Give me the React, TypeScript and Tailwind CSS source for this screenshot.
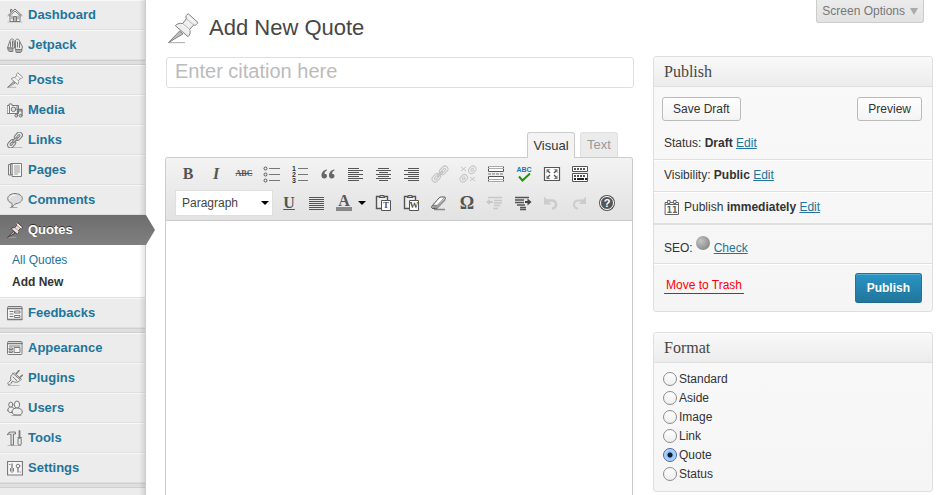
import React, { useState } from "react";

type IconProps = { children: React.ReactNode; size?: string; box?: string };

function Icon({ children, size = "size-4", box = "0 0 16 16" }: IconProps) {
  return (
    <svg
      aria-hidden="true"
      viewBox={box}
      className={`${size} shrink-0`}
      fill="none"
      stroke="#7a7a7a"
      strokeWidth="1"
      strokeLinecap="round"
      strokeLinejoin="round"
    >
      {children}
    </svg>
  );
}

function Pin({ fill, stroke, width }: { fill: string; stroke: string; width: number }) {
  return (
    <g stroke={stroke} strokeWidth={width}>
      <path d="M4 89H50" stroke="#aaa" />
      <path d="M2 88 35 54l9 8z" fill="#bbb" />
      <path
        d="M60 3c-6 2-8 7-5 14L44 32c-8-2-16-1-22 6l38 33c7-6 8-14 5-22l12-13c5 2 9 1 12-7z"
        fill={fill}
      />
      <path d="M57 8 84 32M43 35l21 17" stroke="#fff" />
      <path d="M55 17 77 36M44 32l21 17" strokeWidth={width / 2} />
    </g>
  );
}

const menuIcons: Record<string, React.ReactNode> = {
  Dashboard: (
    <>
      <path d="M1 15h14" stroke="#bbb" />
      <path d="M3 8v6.500h10V8" fill="#f5f5f5" />
      <path d="M1 8.500 8 2l7 6.500M2.500 9 8 4l5.500 5M3.500 5V2.500h1.500V4" />
      <path d="M6.500 14V9.500h3V14M8 9.500V14M5 9v3M11 9v3" />
    </>
  ),
  Jetpack: (
    <>
      <path d="M1 9.500 3 3.500c.7-2 3.500-2 4 0l.5 7.500H1zM8.500 3.500c.5-2 3.300-2 4 .5l3 6-.8 2.500H9z" fill="#e8e8e8" />
      <path d="M.8 11h5v3.500H2.500c-1 0-1.700-1.500-1.700-3.500zM9 12.500h6c0 2-.8 3-2 3H9.500z" fill="#aaa" />
      <path d="M7 6h1.500M7 8h1.500M3.500 5v4.500M5.500 4v5.500M10.500 5v5M12.500 5.500v5" />
    </>
  ),
  Media: (
    <>
      <path d="M.5 3.500H2V2h3v1.500h6.500v8H.5z" fill="#f5f5f5" />
      <circle cx="6.500" cy="7.300" r="2.300" fill="#ddd" />
      <path d="M2.500 4v7M10 4v3" />
      <path d="M10.500 13.500V7.500h4.500V13" strokeWidth="1.300" />
      <path d="M10.500 9h4.500" />
      <circle cx="9.300" cy="13.700" r="1.400" fill="#ccc" />
      <circle cx="13.700" cy="13.700" r="1.400" fill="#ccc" />
    </>
  ),
  Links: (
    <>
      <path d="M1 15.500h14" stroke="#bbb" />
      <g transform="rotate(-48 8 8)">
        <rect x="-1.500" y="5" width="9" height="6" rx="3" fill="#eee" />
        <rect x="1" y="7.100" width="4" height="1.800" rx=".9" />
        <rect x="8.500" y="5" width="9" height="6" rx="3" fill="#eee" />
        <rect x="11" y="7.100" width="4" height="1.800" rx=".9" />
        <rect x="5" y="6.900" width="6" height="2.200" rx="1.100" fill="#ccc" />
      </g>
    </>
  ),
  Pages: (
    <>
      <path d="M4 2.500H1.500v10.500H4M6 1.500H3.500v11H6" />
      <path d="M5.500 1.500h9v13h-9z" fill="#f7f7f7" />
      <path d="M7.500 4h5M7.500 6h5M7.500 8h5M7.500 10h5M7.500 12h3" stroke="#999" />
    </>
  ),
  Comments: (
    <>
      <path d="M3 15.500h7" stroke="#aaa" />
      <path
        d="M8 1.500c4 0 7.300 2.200 7.300 5S12.500 11.300 9 11.600c-1.200.2-2 2.600-4.500 3.600.8-1.500.8-2.700.3-4C2.500 10.500.7 9 .7 6.500c0-2.800 3.300-5 7.300-5z"
        fill="#ddd"
      />
      <path d="M2.500 6.500C3 4.500 5 3.200 8 3.200" stroke="#fff" />
    </>
  ),
  Feedbacks: (
    <>
      <rect x=".5" y="1.500" width="14.500" height="13" rx="1" fill="#f4f4f4" />
      <path d="M1 3.500h14M.5 14.500H15" strokeWidth="1.400" />
      <path d="M3 6.500h3M3 9h3M3 11.500h3" />
      <path d="M8 6h5v2H8zM8 10.500h5v2H8z" />
    </>
  ),
  Appearance: (
    <>
      <rect x=".5" y="1.500" width="14.500" height="13" rx="1" fill="#f4f4f4" />
      <path d="M1 3.500h14" strokeWidth="1.400" />
      <path d="M2.500 6h10.500M2.500 8h3v1.500h-3zM2.500 11h3v1.500h-3z" />
      <path d="M7.500 7.500H13v5H7.500z" />
    </>
  ),
  Plugins: (
    <>
      <path d="M1 15.500h11" stroke="#bbb" />
      <path d="m9.500 3.500 2.500-3M12.700 7.500l2.800-2.300" strokeWidth="1.500" />
      <path d="M6 3.500 13.500 10c-2 2.500-5.500 3-8 1L4 13.500c-1 1.500-2.500 1.500-3 .5s.5-2 2-3l1-1C3 7.500 3.700 5 6 3.500z" fill="#eee" />
      <path d="m7.500 3 7 6.300M6 7l4 3.800" />
    </>
  ),
  Users: (
    <>
      <path d="M5 15.500h9" stroke="#aaa" />
      <ellipse cx="3.800" cy="4.700" rx="2.100" ry="2.600" fill="#eee" />
      <path d="M.8 10.500C.8 8 2 7 4 7s3 1 3 3-1.500 2.500-3 2.500-3.200-.5-3.200-2z" fill="#eee" />
      <ellipse cx="10" cy="4.600" rx="2.600" ry="3.600" fill="#f3f3f3" />
      <path d="M5 12c0-2.500 2-4 5-4s5.300 1.500 5.300 4-2.300 3-5.300 3-5-1-5-3z" fill="#eee" />
    </>
  ),
  Tools: (
    <>
      <path d="M1 15.500h13" stroke="#bbb" />
      <path d="M.5 4.500c.5-2 2-2.500 4-2.500h4v2H6.500v11h-2.500V4.500C2.500 4 1.500 4 .5 4.500z" fill="#ddd" />
      <path d="M12.500 1v6" strokeWidth="1.800" />
      <rect x="11" y="8" width="3.200" height="7" rx="1" fill="#eee" />
      <path d="M11 7.500h3.500" />
    </>
  ),
  Settings: (
    <>
      <rect x=".5" y="1.500" width="15" height="13.500" fill="#f7f7f7" strokeWidth="1.200" />
      <path d="M5 4v4M11 8v4" strokeWidth="1.300" />
      <path d="M3.500 8.500v2.500l1.500 1.500 1.500-1.500V8.500M5 9v1.500" />
      <circle cx="11" cy="6" r="1.800" />
      <path d="M2.500 4.500h.5M13 12h.5" />
    </>
  ),
};

function MenuItem({ name }: { name: string }) {
  return (
    <li>
      <a
        href="#"
        className="flex h-[30px] items-center gap-[5px] border-t border-b border-t-[#f9f9f9] border-b-[#dfdfdf] pl-[7px] text-[13px] leading-[18px] font-bold text-[#21759b]"
      >
        {name === "Posts" ? (
          <Icon box="-3 -3 96 96">
            <Pin fill="#f4f4f4" stroke="#7a7a7a" width={5} />
          </Icon>
        ) : (
          <Icon>{menuIcons[name]}</Icon>
        )}
        <span>{name}</span>
      </a>
    </li>
  );
}

const Separator = () => <li className="h-[5px] border-t border-b border-[#cfcfcf] bg-[#dfdfdf]" />;

function Sidebar() {
  return (
    <nav className="relative w-[146px] shrink-0 border-r border-[#ccc] bg-[#ececec]">
      <ul>
        <MenuItem name="Dashboard" />
        <MenuItem name="Jetpack" />
        <Separator />
        <MenuItem name="Posts" />
        <MenuItem name="Media" />
        <MenuItem name="Links" />
        <MenuItem name="Pages" />
        <MenuItem name="Comments" />
        <li>
          <a
            href="#"
            className="relative z-10 flex h-[30px] items-center gap-[5px] bg-linear-to-b from-[#6d6d6d] to-[#808080] pl-[7px] text-[13px] leading-[18px] font-bold text-white"
          >
            <Icon box="-3 -3 96 96">
              <Pin fill="#ecdcdc" stroke="#443838" width={5} />
            </Icon>
            <span className="[text-shadow:0_-1px_0_#333]">Quotes</span>
            <span className="absolute top-0 left-full h-[30px] w-[10px] bg-linear-to-b from-[#6d6d6d] to-[#808080] [clip-path:polygon(0_0,10%_0,100%_50%,10%_100%,0_100%)]" />
          </a>
          <ul className="h-[53px] border-b border-[#dfdfdf] bg-white pt-[4px] pl-3 text-[12px] leading-[22px]">
            <li>
              <a href="#" className="text-[#21759b]">All Quotes</a>
            </li>
            <li>
              <a href="#" className="font-bold text-[#333]">Add New</a>
            </li>
          </ul>
        </li>
        <MenuItem name="Feedbacks" />
        <Separator />
        <MenuItem name="Appearance" />
        <MenuItem name="Plugins" />
        <MenuItem name="Users" />
        <MenuItem name="Tools" />
        <MenuItem name="Settings" />
        <Separator />
      </ul>
      <div className="pointer-events-none absolute inset-y-0 right-0 w-[6px] bg-linear-to-r from-transparent to-black/10" />
    </nav>
  );
}

function Tool({ label, children }: { label: string; children: React.ReactNode }) {
  return (
    <button
      type="button"
      aria-label={label}
      className="flex h-[26px] w-7 shrink-0 items-center justify-center font-['Liberation_Serif',serif] leading-none text-[#555]"
    >
      {children}
    </button>
  );
}

function Glyph({ children }: { children: React.ReactNode }) {
  return (
    <Icon size="size-[18px]" box="0 0 18 18">
      <g stroke="#555" strokeLinecap="butt" strokeLinejoin="miter">
        {children}
      </g>
    </Icon>
  );
}

const Bullets = () => (
  <Glyph>
    <path d="M6 3.500h11M6 9.500h11M6 15.500h11" stroke="#777" />
    <circle cx="2.500" cy="3.500" r="1.500" />
    <circle cx="2.500" cy="9.500" r="1.500" />
    <circle cx="2.500" cy="15.500" r="1.500" />
  </Glyph>
);

const Numbers = () => (
  <Glyph>
    <path d="M7 3.500h10M7 9.500h10M7 15.500h10" stroke="#777" />
    <g fill="#333" stroke="none" fontFamily="Liberation Sans, sans-serif" fontSize="7" fontWeight="bold">
      <text x="1" y="6">1</text>
      <text x="1" y="12">2</text>
      <text x="1" y="18">3</text>
    </g>
  </Glyph>
);

const Quotation = () => (
  <Glyph>
    <path
      d="M8 4.500C4.500 5 2.500 7.500 2.500 10.500 2.500 12.500 3.600 13.500 5.200 13.500S8 12.400 8 11 6.800 8.700 5.400 8.800C5.600 7.300 6.600 6 8 5.300zM15.500 4.500c-3.500.5-5.500 3-5.500 6 0 2 1.100 3 2.700 3s2.800-1.100 2.800-2.500-1.200-2.300-2.600-2.200c.2-1.500 1.200-2.800 2.600-3.500z"
      fill="#666"
      stroke="none"
    />
  </Glyph>
);

const AlignLeft = () => (
  <Glyph>
    <path d="M1 3.500h11M1 5.500h15M1 7.500h11M1 9.500h15M1 11.500h11M1 13.500h15M1 15.500h11" />
  </Glyph>
);

const AlignCenter = () => (
  <Glyph>
    <path d="M3 3.500h11M1 5.500h15M4 7.500h9M1 9.500h15M3 11.500h11M1 13.500h15M4 15.500h9" />
  </Glyph>
);

const AlignRight = () => (
  <Glyph>
    <path d="M5 3.500h11M1 5.500h15M5 7.500h11M1 9.500h15M5 11.500h11M1 13.500h15M5 15.500h11" />
  </Glyph>
);

const Justify = () => (
  <Glyph>
    <path d="M1 3.500h15M1 5.500h15M1 7.500h15M1 9.500h15M1 11.500h15M1 13.500h15M1 15.500h15" />
  </Glyph>
);

const LinkGlyph = () => (
  <Glyph>
    <g transform="rotate(-45 9 9)" stroke="#c2c2c2">
      <rect x="-1" y="6" width="9.500" height="6" rx="3" />
      <rect x="1.500" y="8" width="4.500" height="2" rx="1" />
      <rect x="9.500" y="6" width="9.500" height="6" rx="3" />
      <rect x="12" y="8" width="4.500" height="2" rx="1" />
      <path d="M6 8h6v2H6z" fill="#ccc" />
    </g>
  </Glyph>
);

const UnlinkGlyph = () => (
  <Glyph>
    <g stroke="#c6c6c6">
      <g transform="rotate(-45 9 9)">
        <rect x="-1" y="6" width="8" height="6" rx="3" />
        <rect x="1.500" y="8" width="3" height="2" rx="1" />
        <rect x="11" y="6" width="8" height="6" rx="3" />
        <rect x="13.500" y="8" width="3" height="2" rx="1" />
      </g>
      <path d="m2 2 5 4M2 6l5-4M11 12l5 4M11 16l5-4" />
    </g>
  </Glyph>
);

const MoreGlyph = () => (
  <Glyph>
    <path d="M1.500 1v5.500h15V1M1.500 17v-5.500h15V17" fill="#fff" />
    <path d="M1 1.500h16M1 3.500h16M1 14.500h16M1 16.500h16" stroke="#aaa" />
    <path d="M1 9h16" stroke="#777" strokeDasharray="3 1" />
  </Glyph>
);

const SpellGlyph = () => (
  <span className="flex flex-col items-center">
    <span className="font-['Liberation_Sans',sans-serif] text-[7px] leading-[7px] font-bold text-[#1a78b8]">ABC</span>
    <svg viewBox="0 0 14 9" className="h-[9px] w-[14px]" aria-hidden="true">
      <path d="m2 3.500 3.500 4L13 .5" fill="none" stroke="#1a9a00" strokeWidth="2" />
    </svg>
  </span>
);

const FullscreenGlyph = () => (
  <Glyph>
    <path d="M1.500 2.500h15v13h-15z" fill="#fff" strokeWidth="1.200" />
    <path d="M3.500 4.200h3.800L3.500 8zM14.500 4.200h-3.800L14.500 8zM3.500 14h3.800L3.500 10.200zM14.500 14h-3.800l3.800-3.800z" fill="#777" stroke="none" />
    <path d="M5 6l2 2M13 6l-2 2M5 12l2-2M13 12l-2-2" strokeWidth="1.300" />
  </Glyph>
);

const KitchenSinkGlyph = () => (
  <Glyph>
    <path d="M1.500 1.500h15v5h-15zM1.500 8.500h15v8h-15z" fill="#fff" />
    <path d="M3 4h12M3 11h12" strokeWidth="2" strokeDasharray="2 1" />
    <path d="M3 14h2M6 14h7M14 14h2" stroke="#222" strokeWidth="2" />
  </Glyph>
);

function PasteGlyph({ letter }: { letter: string }) {
  return (
    <span className="relative">
      <Glyph>
        <path d="M2.500 2.500h11v12h-11z" fill="#eee" strokeWidth="1.400" />
        <path d="M5 3.500h6M6 1.500h4v2H6z" fill="#ccc" />
        <path d="M7.500 6.500h9v10h-9z" fill="#fff" />
      </Glyph>
      <span className="absolute right-px bottom-[2px] w-[10px] text-center text-[9px] leading-[9px] font-bold">{letter}</span>
    </span>
  );
}

const EraserGlyph = () => (
  <Glyph>
    <path d="M4 15.500h11" stroke="#888" strokeWidth="1.500" />
    <path d="m2 12 7-8c.6-.8 1.300-1 2.200-1H14c1.500 0 2 1 1 2.200l-7 8.300c-.6.8-1.300 1-2.200 1H3c-1.500 0-2-1.200-1-2.500z" fill="#fff" />
    <path d="M2 11.500h5.500L15.500 4v2.500L8 14H3c-1.500 0-1.500-1.500-1-2.500z" fill="#999" stroke="none" />
    <path d="m2.500 11.200 4.800.1 7.500-8" strokeWidth=".7" />
  </Glyph>
);

const OutdentGlyph = () => (
  <Glyph>
    <path d="M2 3.500h14M8 6.500h8M8 9h8M8 11.500h6M7 14.500h5" stroke="#c8c8c8" strokeWidth="1.500" />
    <path d="m0 8 4-3v2h3v2H4v2z" fill="#c8c8c8" stroke="none" />
  </Glyph>
);

const IndentGlyph = () => (
  <Glyph>
    <path d="M1 3.500h14M1 6h9M1 8.500h9M3 11h8M6 13.500h6M6 15.500h6" strokeWidth="1.500" />
    <path d="m17.500 8-4-3.500V7H11v2h2.500v2.500z" fill="#444" stroke="none" />
  </Glyph>
);

const UndoGlyph = () => (
  <Glyph>
    <path d="M4 6.500h5.500c3 0 4.500 1.700 4.500 4 0 2.200-1.500 3.800-4 4.200" stroke="#ccc" strokeWidth="2.500" />
    <path d="M2 2.500v8h7.500z" fill="#ccc" stroke="none" />
  </Glyph>
);

const RedoGlyph = () => (
  <Glyph>
    <path d="M13 6.500H8.500C5.500 6.500 4 8.200 4 10.500c0 2.200 1.500 3.800 4 4.200" stroke="#ccc" strokeWidth="2" />
    <path d="M16 2.500v7.500H9z" fill="#ccc" stroke="none" />
  </Glyph>
);

const Caret = () => (
  <svg viewBox="0 0 8 4" className="h-1 w-2" aria-hidden="true">
    <path d="M0 0h8L4 4z" fill="#000" />
  </svg>
);

function Editor() {
  return (
    <section className="mr-px -ml-px flex flex-1 flex-col">
      <div className="z-10 flex h-[26px] gap-[5px] self-end pr-[15px] text-[13px] leading-[18px]">
        <button type="button" className="h-[26px] w-12 rounded-t-[3px] border border-b-0 border-[#ccc] bg-[#f3f3f3] text-[#333]">
          Visual
        </button>
        <button type="button" className="h-[25px] w-[38px] rounded-t-[3px] border border-b-0 border-[#dfdfdf] bg-[#ebebeb] text-[#999]">
          Text
        </button>
      </div>
      <div className="-mt-px flex flex-1 flex-col rounded-t-[3px] border border-b-0 border-[#ccc] bg-white">
        <div className="rounded-t-[3px] border-b border-[#ccc] bg-linear-to-b from-[#f3f3f3] to-[#e2e2e2] pt-[3px] pb-[4px] pl-2">
          <div className="flex flex-wrap">
            <Tool label="Bold"><span className="text-[16px] font-bold">B</span></Tool>
            <Tool label="Italic"><span className="text-[16px] font-bold italic">I</span></Tool>
            <Tool label="Strikethrough"><span className="text-[8px] font-bold line-through">ABC</span></Tool>
            <Tool label="Unordered list"><Bullets /></Tool>
            <Tool label="Ordered list"><Numbers /></Tool>
            <Tool label="Blockquote"><Quotation /></Tool>
            <Tool label="Align left"><AlignLeft /></Tool>
            <Tool label="Align center"><AlignCenter /></Tool>
            <Tool label="Align right"><AlignRight /></Tool>
            <Tool label="Insert link"><LinkGlyph /></Tool>
            <Tool label="Unlink"><UnlinkGlyph /></Tool>
            <Tool label="Insert More tag"><MoreGlyph /></Tool>
            <Tool label="Spellcheck"><SpellGlyph /></Tool>
            <Tool label="Fullscreen"><FullscreenGlyph /></Tool>
            <Tool label="Kitchen sink"><KitchenSinkGlyph /></Tool>
          </div>
          <div className="mt-[3px] flex flex-wrap items-center">
            <label className="relative mr-[2px] ml-px flex items-center">
              <select
                aria-label="Text format"
                className="h-[26px] w-[98px] appearance-none border border-[#dfdfdf] bg-white pl-[6px] text-[12px] text-[#444]"
              >
                <option>Paragraph</option>
              </select>
              <span className="pointer-events-none absolute right-1"><Caret /></span>
            </label>
            <Tool label="Underline"><span className="text-[16px] font-bold underline">U</span></Tool>
            <Tool label="Justify"><Justify /></Tool>
            <button type="button" aria-label="Text color" className="flex h-[26px] w-[38px] items-center gap-[6px] pl-[5px]">
              <span className="w-4 border-b-4 border-[#888] text-center font-['Liberation_Serif',serif] text-[16px] leading-[12px] font-bold text-[#555]">
                A
              </span>
              <Caret />
            </button>
            <Tool label="Paste as text"><PasteGlyph letter="T" /></Tool>
            <Tool label="Paste from Word"><PasteGlyph letter="W" /></Tool>
            <Tool label="Remove formatting"><EraserGlyph /></Tool>
            <Tool label="Special character"><span className="text-[18px] font-bold">Ω</span></Tool>
            <Tool label="Outdent"><OutdentGlyph /></Tool>
            <Tool label="Indent"><IndentGlyph /></Tool>
            <Tool label="Undo"><UndoGlyph /></Tool>
            <Tool label="Redo"><RedoGlyph /></Tool>
            <Tool label="Help">
              <span className="flex size-[14px] items-center justify-center rounded-full border border-white bg-[#555] font-['Liberation_Sans',sans-serif] text-[11px] font-bold text-white ring-1 ring-[#555]">
                ?
              </span>
            </Tool>
          </div>
        </div>
        <textarea aria-label="Content" className="min-h-[240px] w-full flex-1 resize-none outline-none" />
      </div>
    </section>
  );
}

function Box({ title, children }: { title: string; children: React.ReactNode }) {
  return (
    <section className="rounded-[3px] border border-[#dfdfdf] bg-linear-to-b from-[#f9f9f9] to-[#f5f5f5]">
      <h3 className="h-[30px] rounded-t-[3px] border-b border-[#dfdfdf] bg-linear-to-b from-[#f9f9f9] to-[#ececec] pl-[10px] font-['Liberation_Serif',serif] text-[16px] leading-[29px] text-[#464646]">
        {title}
      </h3>
      {children}
    </section>
  );
}

const Edit = ({ children }: { children: React.ReactNode }) => (
  <a href="#" className="text-[#21759b] underline">{children}</a>
);

const secondary =
  "h-6 rounded-[3px] border border-[#bbb] bg-linear-to-b from-[#fefefe] to-[#f4f4f4] px-[10px] text-[12px] text-[#333]";

function PublishBox() {
  return (
    <Box title="Publish">
      <div className="flex justify-between px-[10px] pt-[10px] pb-[6px] pl-2">
        <button type="button" className={secondary}>Save Draft</button>
        <button type="button" className={secondary}>Preview</button>
      </div>
      <div className="h-[33px] border-b border-[#dfdfdf] px-[10px] leading-[32px]">
        Status: <b>Draft</b> <Edit>Edit</Edit>
      </div>
      <div className="h-8 border-t border-b border-t-white border-b-[#dfdfdf] px-[10px] leading-[28px]">
        Visibility: <b>Public</b> <Edit>Edit</Edit>
      </div>
      <div className="flex h-[33px] items-start gap-1 border-t border-b-2 border-t-white border-b-[#dfdfdf] px-[10px] leading-[28px]">
        <span className="pt-[6px]">
          <Icon>
            <path d="M1.500 3.500h13v12h-13z" fill="#fff" stroke="#666" />
            <path d="M1.500 5.500h13" stroke="#666" />
            <path d="M4 1.500h2v3H4zM10 1.500h2v3h-2z" fill="#fff" stroke="#666" />
            <text
              x="8"
              y="14"
              textAnchor="middle"
              fill="#666"
              stroke="none"
              fontFamily="DejaVu Sans, sans-serif"
              fontSize="8"
              fontWeight="bold"
            >
              11
            </text>
          </Icon>
        </span>
        <span>
          Publish <b>immediately</b> <Edit>Edit</Edit>
        </span>
      </div>
      <div className="flex h-[39px] items-start border-b border-[#dfdfdf] px-[10px] pt-[11px]">
        <span className="pt-[3px] leading-[18px]">SEO:</span>
        <span className="mr-1 ml-[3px] size-[14px] rounded-full bg-radial-[at_35%_35%] from-[#c4c4c4] to-[#777]" />
        <span className="pt-[3px] leading-[18px]"><Edit>Check</Edit></span>
      </div>
      <div className="flex h-[47px] items-start justify-between border-t border-white pt-2 pr-[10px] pl-[10px]">
        <a href="#" className="mt-1 border-b border-[#f00] px-[2px] leading-4 text-[#f00]">Move to Trash</a>
        <button
          type="button"
          className="h-[30px] rounded-[3px] border border-[#21759b] border-b-[#1e6a8d] bg-linear-to-b from-[#2a95c5] to-[#21759b] px-[11px] text-[12px] font-bold text-white shadow-[inset_0_1px_0_rgba(120,200,230,0.5)] [text-shadow:0_1px_0_rgba(0,0,0,0.1)]"
        >
          Publish
        </button>
      </div>
    </Box>
  );
}

const formats = ["Standard", "Aside", "Image", "Link", "Quote", "Status"];

function FormatBox() {
  const [format, setFormat] = useState("Quote");
  return (
    <Box title="Format">
      <div className="pt-[6px] pb-2 pl-[9px]">
        {formats.map((name) => (
          <label key={name} className="flex h-[19px] items-center gap-[2px]">
            <input
              type="radio"
              name="format"
              checked={format === name}
              onChange={() => setFormat(name)}
              className="size-[14px] appearance-none rounded-full border border-[#8c8c8c] bg-linear-to-b from-[#fff] to-[#eee] checked:border-[#4a62a8] checked:bg-[radial-gradient(circle,#0b1c3a_0_2px,#8fc1f2_3px,#c8e6fb_7px)]"
            />
            <span>{name}</span>
          </label>
        ))}
      </div>
    </Box>
  );
}

export default function App() {
  return (
    <div className="flex min-h-screen bg-white font-['Liberation_Sans',Arial,sans-serif] text-[12px] text-[#333]">
      <Sidebar />
      <div className="flex min-w-0 flex-1 flex-col pr-[7px] pl-5">
        <header className="flex h-14 items-start justify-between pr-[9px]">
          <div className="flex h-14 items-center gap-[9px]">
            <Icon size="size-[34px]" box="-6 -6 102 102">
              <Pin fill="#eee" stroke="#808080" width={3} />
            </Icon>
            <h1 className="text-[22px] leading-[28px] text-[#464646]">Add New Quote</h1>
          </div>
          <button
            type="button"
            className="flex h-[23px] items-center gap-[5px] rounded-b-[3px] border border-t-0 border-[#ccc] bg-linear-to-b from-[#ececec] to-[#e2e2e2] px-[5px] text-[12px] text-[#777]"
          >
            Screen Options
            <svg viewBox="0 0 8 7" className="h-[7px] w-2" aria-hidden="true">
              <path d="M0 0h8L4 7z" fill="#aaa" />
            </svg>
          </button>
        </header>
        <div className="flex flex-1 gap-[19px]">
          <main className="flex min-w-0 flex-1 flex-col pt-px">
            <input
              type="text"
              aria-label="Citation"
              placeholder="Enter citation here"
              className="mb-[44px] h-[31px] w-full rounded-[3px] border border-[#dfdfdf] px-2 pb-[2px] text-[20px] outline-none placeholder:text-[#bbb]"
            />
            <Editor />
          </main>
          <aside className="flex w-[280px] shrink-0 flex-col gap-5 pb-[3px]">
            <PublishBox />
            <FormatBox />
          </aside>
        </div>
      </div>
    </div>
  );
}
